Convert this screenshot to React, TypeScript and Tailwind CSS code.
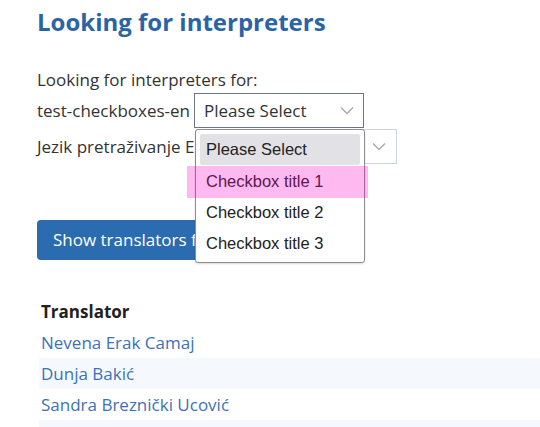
import React from "react";

function Chevron({ className }: { className?: string }) {
  return (
    <svg className={className} width="14" height="9" viewBox="0 0 14 9" fill="none">
      <path d="M1 1.5 L7 7.5 L13 1.5" stroke="#ababab" strokeWidth="1.5" />
    </svg>
  );
}

export default function App() {
  const rows = ["Nevena Erak Camaj", "Dunja Bakić", "Sandra Breznički Ucović", ""];
  return (
    <div className="relative w-[540px] h-[427px] overflow-hidden bg-white font-['Open_Sans',sans-serif] text-[17px] text-[#333333]">
      <div className="pl-[37px]">
        <h1 className="pt-[6px] text-[24px] leading-[32px] font-bold text-[#2a64a4]">
          Looking for interpreters
        </h1>
        <p className="mt-[30px] leading-[24px]">Looking for interpreters for:</p>
        <div className="flex items-center h-[35px] mt-[1px]">
          <span className="leading-[24px]">test-checkboxes-en</span>
          <div className="ml-[4px] w-[170px] h-[35px] border border-[#6b7789] flex items-center justify-between pl-[9px] pr-[9px]">
            <span>Please Select</span>
            <Chevron />
          </div>
        </div>
        <div className="flex items-center h-[35px] mt-[1px] w-[360px]">
          <span className="leading-[24px] whitespace-nowrap">Jezik pretraživanje EN</span>
          <div className="ml-[4px] flex-1 h-[35px] border border-[#c9d5e0] flex items-center justify-end pr-[10px]">
            <Chevron />
          </div>
        </div>
        <button className="mt-[56px] h-[40px] px-[16px] rounded-[4px] bg-[#2b6bb0] text-white leading-[24px]">
          Show translators for
        </button>
        <div className="mt-[36px] ml-[2px]">
          <div className="h-[31px] flex items-center pl-[2px] font-bold text-[#222222]">Translator</div>
          {rows.map((r, i) => (
            <div
              key={i}
              className={`h-[31px] flex items-center pl-[2px] text-[#3b72b8] ${i % 2 === 1 ? "bg-[#f5f9fd]" : "bg-white"}`}
            >
              {r}
            </div>
          ))}
        </div>
      </div>

      {/* native select popup */}
      <div className="absolute left-[195px] top-[129px] w-[170px] h-[134px] border border-[#8c8c8c] rounded-[3px] bg-white shadow-[0_1px_2px_rgba(0,0,0,0.15)] px-[4px] pt-[4px] font-['Liberation_Sans',Arial,sans-serif] text-[16.5px] text-[#222222]">
        <div className="h-[31px] flex items-center pl-[6px] bg-[#e2e1e6] rounded-[2px]">Please Select</div>
        <div className="h-[32px] flex items-center pl-[6px]">Checkbox title 1</div>
        <div className="h-[31px] flex items-center pl-[6px]">Checkbox title 2</div>
        <div className="h-[31px] flex items-center pl-[6px]">Checkbox title 3</div>
      </div>
      <div className="absolute left-[187px] top-[166px] w-[181px] h-[32px] bg-[rgba(250,0,200,0.27)]" />
    </div>
  );
}
